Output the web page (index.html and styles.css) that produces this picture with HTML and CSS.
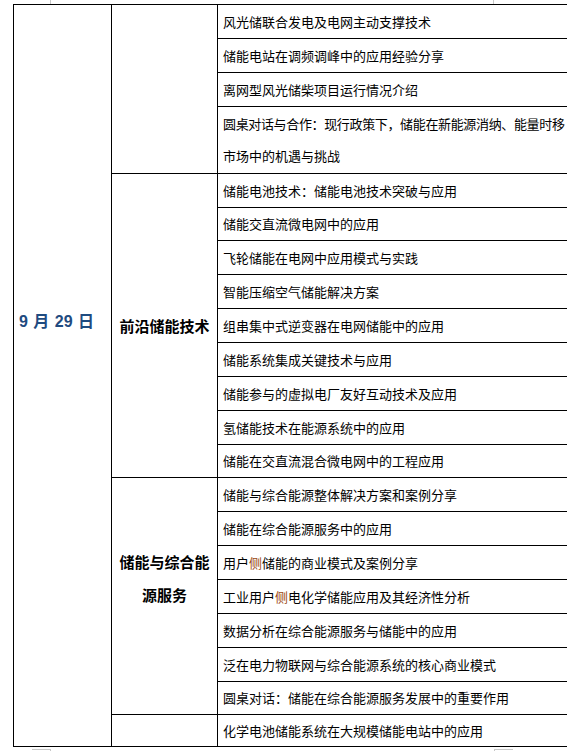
FILE: index.html
```html
<!DOCTYPE html>
<html lang="zh-CN">
<head>
<meta charset="utf-8">
<title>日程</title>
<link rel="stylesheet" href="styles.css">
</head>
<body>
<span class="mark mark-tl"></span>
<span class="mark mark-tr"></span>
<span class="mark mark-bl"></span>
<span class="mark mark-br"></span>
<table class="agenda">
  <colgroup>
    <col class="c-date">
    <col class="c-topic">
    <col class="c-item">
  </colgroup>
  <tbody>
    <tr class="r34">
      <td class="date" rowspan="22">9 月 29 日</td>
      <td class="topic" rowspan="4"></td>
      <td class="item">风光储联合发电及电网主动支撑技术</td>
    </tr>
    <tr class="r34"><td class="item">储能电站在调频调峰中的应用经验分享</td></tr>
    <tr class="r34"><td class="item">离网型风光储柴项目运行情况介绍</td></tr>
    <tr class="r67"><td class="item two"><span class="tight">圆桌对话与合作：现行政策下，储能在新能源消纳、能量时移</span><br>市场中的机遇与挑战</td></tr>

    <tr class="r34">
      <td class="topic" rowspan="9">前沿储能技术</td>
      <td class="item">储能电池技术：储能电池技术突破与应用</td>
    </tr>
    <tr class="r33"><td class="item">储能交直流微电网中的应用</td></tr>
    <tr class="r34"><td class="item">飞轮储能在电网中应用模式与实践</td></tr>
    <tr class="r34"><td class="item">智能压缩空气储能解决方案</td></tr>
    <tr class="r34"><td class="item">组串集中式逆变器在电网储能中的应用</td></tr>
    <tr class="r34"><td class="item">储能系统集成关键技术与应用</td></tr>
    <tr class="r34"><td class="item">储能参与的虚拟电厂友好互动技术及应用</td></tr>
    <tr class="r34"><td class="item">氢储能技术在能源系统中的应用</td></tr>
    <tr class="r33"><td class="item">储能在交直流混合微电网中的工程应用</td></tr>

    <tr class="r34">
      <td class="topic topic-two" rowspan="7">储能与综合能<br>源服务</td>
      <td class="item">储能与综合能源整体解决方案和案例分享</td>
    </tr>
    <tr class="r34"><td class="item">储能在综合能源服务中的应用</td></tr>
    <tr class="r34"><td class="item">用户<span class="hl">侧</span>储能的商业模式及案例分享</td></tr>
    <tr class="r34"><td class="item">工业用户<span class="hl">侧</span>电化学储能应用及其经济性分析</td></tr>
    <tr class="r34"><td class="item">数据分析在综合能源服务与储能中的应用</td></tr>
    <tr class="r34"><td class="item">泛在电力物联网与综合能源系统的核心商业模式</td></tr>
    <tr class="r33"><td class="item">圆桌对话：储能在综合能源服务发展中的重要作用</td></tr>

    <tr class="r32">
      <td class="topic"></td>
      <td class="item">化学电池储能系统在大规模储能电站中的应用</td>
    </tr>
  </tbody>
</table>
</body>
</html>
```
FILE: styles.css
```css
html, body {
  margin: 0;
  padding: 0;
  overflow: hidden;
  background: #ffffff;
}

body {
  position: relative;
  width: 567px;
  height: 751px;
  font-family: "Noto Sans CJK SC", "Noto Sans", sans-serif;
  color: #000000;
}

.agenda {
  margin: 4px 0 0 13px;
  border-collapse: collapse;
  table-layout: fixed;
  width: 570px;
}

.c-date { width: 98px; }
.c-topic { width: 106px; }
.c-item { width: 366px; }

.agenda td {
  border: 1px solid #000000;
  padding: 0;
}

.r34 { height: 34px; }
.r33 { height: 33px; }
.r32 { height: 32px; }
.r67 { height: 67px; }

.item {
  font-size: 13px;
  line-height: 18px;
  padding: 0 0 0 5px !important;
  vertical-align: middle;
  white-space: nowrap;
}

.item.two {
  line-height: 32.5px;
}

.tight {
  letter-spacing: -0.35px;
}

.hl {
  color: #9a4610;
}

.date {
  vertical-align: top;
  padding: 300px 0 0 5px !important;
  font-family: "Liberation Sans", "Noto Sans CJK SC", sans-serif;
  font-weight: bold;
  font-size: 16px;
  line-height: 34px;
  color: #1f4b80;
  white-space: nowrap;
  word-spacing: 1px;
}

.topic {
  text-align: center;
  vertical-align: middle;
  font-weight: bold;
  font-size: 15px;
  line-height: 34px;
}

.topic-two {
  padding-bottom: 36px !important;
  line-height: 33px;
}

.mark {
  position: absolute;
  border-color: #c8c8c8;
  border-style: solid;
  border-width: 0;
}

.mark-tl {
  left: 50px;
  top: 0;
  height: 4px;
  border-left-width: 1px;
}

.mark-tr {
  left: 493px;
  top: 0;
  height: 4px;
  border-left-width: 1px;
}

.mark-bl {
  left: 32px;
  top: 749px;
  width: 18px;
  height: 4px;
  border-top-width: 1px;
  border-right-width: 1px;
}

.mark-br {
  left: 494px;
  top: 749px;
  width: 18px;
  height: 4px;
  border-top-width: 1px;
  border-left-width: 1px;
}
```
